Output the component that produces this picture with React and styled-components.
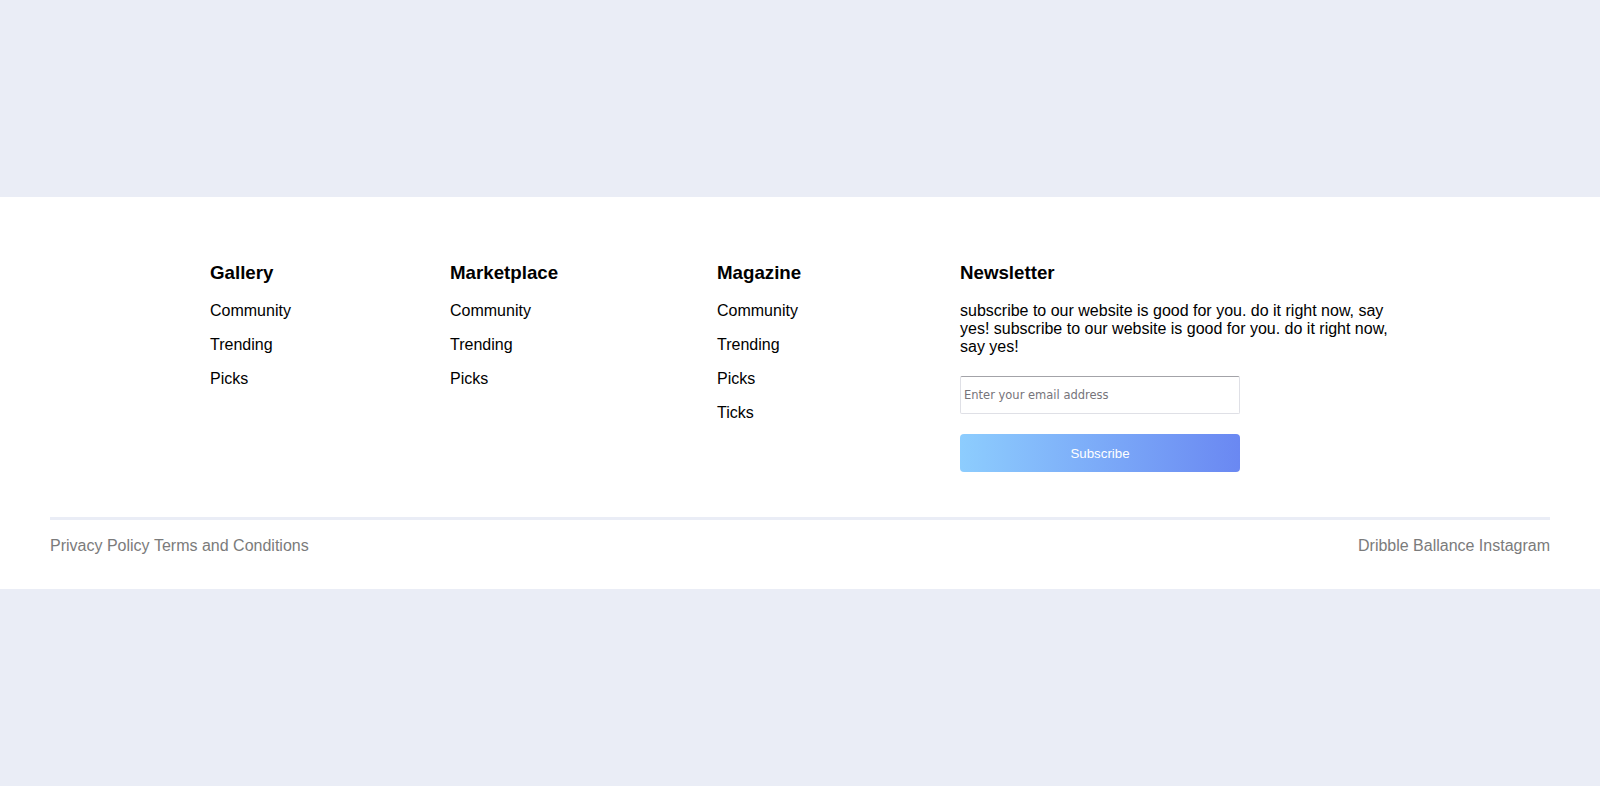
import React from 'react';
import styled, { createGlobalStyle } from 'styled-components';

const GlobalStyle = createGlobalStyle`
  body {
    margin: 0;
    background: #eaedf6;
    font-family: "Liberation Sans", Arial, sans-serif;
  }
`;

const columns = [{
  title: 'Gallery',
  links: ['Community', 'Trending', 'Picks']
}, {
  title: 'Marketplace',
  links: ['Community', 'Trending', 'Picks']
}, {
  title: 'Magazine',
  links: ['Community', 'Trending', 'Picks', 'Ticks']
}];

const blurb = 'subscribe to our website is good for you. do it right now, say yes! subscribe to our website is good for you. do it right now, say yes!';

const Page = styled.div`
  min-height: 100vh;
  display: flex;
  align-items: center;
`;

const Footer = styled.footer`
  width: 100%;
  background: #fff;
  padding: 65px 50px 34px;
  box-sizing: border-box;
`;

const Top = styled.div`
  display: grid;
  grid-template-columns: 240px 267px 243px 440px;
  padding-left: 160px;
  padding-bottom: 45px;
  border-bottom: 3px solid #eaedf6;
`;

const Column = styled.div`
  display: flex;
  flex-direction: column;
`;

const Heading = styled.h3`
  margin: 0 0 19px;
  font-size: 18.72px;
  font-weight: 700;
  line-height: 21px;
  color: #000;
`;

const FooterLink = styled.a`
  display: block;
  font-size: 16px;
  line-height: 18px;
  color: #000;
  text-decoration: none;
  margin-bottom: 16px;
  cursor: pointer;
`;

const Blurb = styled.p`
  margin: 0 0 20px;
  font-size: 16px;
  line-height: 18px;
  color: #000;
`;

const EmailInput = styled.input`
  width: 280px;
  height: 38px;
  box-sizing: border-box;
  padding: 0 3px;
  border: 1px solid #dfe0e6;
  border-top-color: #a3a3a8;
  border-radius: 2px;
  font-family: "DejaVu Sans", Verdana, sans-serif;
  font-size: 11.5px;
  outline: none;
  &::placeholder {
    color: #76747a;
  }
`;

const SubscribeButton = styled.button`
  margin-top: 20px;
  width: 280px;
  height: 38px;
  border: none;
  border-radius: 4px;
  background: linear-gradient(90deg, #8dcdfe 0%, #6a88f2 100%);
  color: #fff;
  font-family: "Liberation Sans", Arial, sans-serif;
  font-size: 13.3px;
  cursor: pointer;
`;

const Bottom = styled.div`
  display: flex;
  justify-content: space-between;
  padding-top: 17px;
  font-size: 16px;
  line-height: 18px;
  color: #7b7b7b;
`;

const BottomLinks = styled.div`
  display: flex;
  gap: 4.4px;
`;

const BottomLink = styled.a`
  color: inherit;
  text-decoration: none;
  cursor: pointer;
`;

export default function App() {
  return (
    <Page>
      <GlobalStyle />
      <Footer>
        <Top>
          {columns.map((col) => (
            <Column key={col.title}>
              <Heading>{col.title}</Heading>
              {col.links.map((l) => (
                <FooterLink key={l}>{l}</FooterLink>
              ))}
            </Column>
          ))}
          <Column>
            <Heading>Newsletter</Heading>
            <Blurb>{blurb}</Blurb>
            <EmailInput type="email" placeholder="Enter your email address" />
            <SubscribeButton>Subscribe</SubscribeButton>
          </Column>
        </Top>
        <Bottom>
          <BottomLinks>
            <BottomLink>Privacy Policy</BottomLink>
            <BottomLink>Terms and Conditions</BottomLink>
          </BottomLinks>
          <BottomLinks>
            <BottomLink>Dribble</BottomLink>
            <BottomLink>Ballance</BottomLink>
            <BottomLink>Instagram</BottomLink>
          </BottomLinks>
        </Bottom>
      </Footer>
    </Page>
  );
}
